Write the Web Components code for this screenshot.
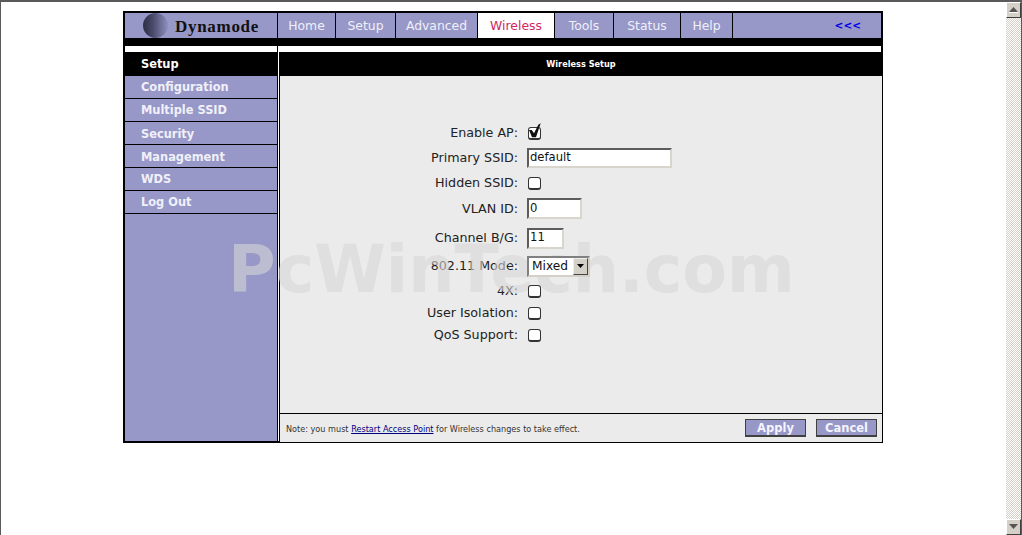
<!DOCTYPE html>
<html><head><meta charset="utf-8"><style>
html,body{margin:0;padding:0;height:100%;overflow:hidden;background:#fff}
body{font-family:"DejaVu Sans",sans-serif}
</style></head><body>
<dm-window>
  <dm-frame>
    <dm-tab slot="tabs" w="57">Home</dm-tab>
    <dm-tab slot="tabs" w="59">Setup</dm-tab>
    <dm-tab slot="tabs" w="81">Advanced</dm-tab>
    <dm-tab slot="tabs" w="76" active>Wireless</dm-tab>
    <dm-tab slot="tabs" w="58">Tools</dm-tab>
    <dm-tab slot="tabs" w="66">Status</dm-tab>
    <dm-tab slot="tabs" w="51">Help</dm-tab>
    <dm-side slot="side" active>Setup</dm-side>
    <dm-side slot="side">Configuration</dm-side>
    <dm-side slot="side">Multiple SSID</dm-side>
    <dm-side slot="side" style="line-height:25px">Security</dm-side>
    <dm-side slot="side" style="line-height:25px">Management</dm-side>
    <dm-side slot="side">WDS</dm-side>
    <dm-side slot="side">Log Out</dm-side>
    <dm-row h="25" label="Enable AP:"><dm-check checked></dm-check></dm-row>
    <dm-row h="25" label="Primary SSID:"><dm-text w="145" h="20">default</dm-text></dm-row>
    <dm-row h="26" label="Hidden SSID:"><dm-check></dm-check></dm-row>
    <dm-row h="25" label="VLAN ID:"><dm-text w="55" h="21">0</dm-text></dm-row>
    <dm-row h="34" label="Channel B/G:"><dm-text w="37" h="21">11</dm-text></dm-row>
    <dm-row h="22" label="802.11 Mode:"><dm-select>Mixed</dm-select></dm-row>
    <dm-row h="28" label="4X:"><dm-check></dm-check></dm-row>
    <dm-row h="16" label="User Isolation:"><dm-check></dm-check></dm-row>
    <dm-row h="28" label="QoS Support:"><dm-check></dm-check></dm-row>
    <dm-btn slot="actions">Apply</dm-btn>
    <dm-btn slot="actions">Cancel</dm-btn>
  </dm-frame>
</dm-window>
<script>
function def(name, css, html, init){
  customElements.define(name, class extends HTMLElement{
    connectedCallback(){
      if(this.shadowRoot) return;
      const r=this.attachShadow({mode:'open'});
      r.innerHTML='<style>'+css+'</style>'+html;
      if(init) init(this,r);
    }
  });
}
const PURPLE='#9797c8';
def('dm-window',`
:host{display:flex;width:1022px;height:535px;box-sizing:border-box;border-top:2px solid #5a5a5a;position:relative}
.page{flex:1;border-left:1px solid #5a5a5a;padding:9px 0 0 122px;min-width:0;position:relative}
.mark{position:absolute;left:227px;top:235px;font:bold 65px/1 "DejaVu Sans",sans-serif;color:rgba(215,215,215,.6);white-space:nowrap;pointer-events:none;z-index:5}
`,`<div class="page"><slot></slot><div class="mark">PcWinTech.com</div></div><dm-scroll></dm-scroll>`);
def('dm-scroll',`
:host{display:flex;flex-direction:column;width:16px;box-sizing:border-box;margin-top:0;border-right:1px solid #5a5a5a}
.b{height:16px;flex:none;box-sizing:border-box;background:#d4d0c8;border:1px solid;border-color:#fff #404040 #404040 #fff;display:flex;align-items:center;justify-content:center}
.t{flex:1;background-color:#fff;background-image:conic-gradient(#d4d0c8 25%,#fff 0 50%,#d4d0c8 0 75%,#fff 0);background-size:2px 2px}
`,`<div class="b"><svg width="9" height="6"><path d="M4.5 0L9 5H0z" fill="#555"/><path d="M0 5h9v1H0z" fill="#fff"/></svg></div><div class="t"></div><div class="b"><svg width="9" height="6"><path d="M0 0h9L4.5 5z" fill="#555"/></svg></div>`);
def('dm-frame',`
:host{display:flex;flex-direction:column;width:760px;height:432px;box-sizing:border-box;border:2px solid #000;background:#000}
header{display:flex;gap:1px;height:25px;flex:none}
.logo{width:152px;background:${PURPLE};display:flex;align-items:center;box-sizing:border-box;padding-left:18px;gap:7px}
.ball{width:25px;height:25px;border-radius:50%;background:linear-gradient(90deg,#2e2e44 0,#4a4a6c 40%,#9090c0 100%);flex:none}
.brand{font:bold 17px/1 "Liberation Serif",serif;color:#111;letter-spacing:.7px;position:relative;top:1px}
.rest{flex:1;background:${PURPLE};display:flex;align-items:center;justify-content:flex-end;padding-right:20px;font:bold 10.5px/1 "DejaVu Sans",sans-serif;color:#0000e6}
.body{display:flex;flex:1;margin-top:8px;min-height:0;gap:1px}
.left{width:152px;flex:none;display:flex;flex-direction:column;background:${PURPLE}}
.bar{height:6px;background:#fff;flex:none}
.right{flex:1;display:flex;flex-direction:column;background:#fff;min-width:0}
main{flex:1;margin:0 -1px -1px 1px;border-left:1px solid #000;display:flex;flex-direction:column;background:#ebebeb;min-height:0}
.title{height:24px;flex:none;background:#000;color:#fff;font:bold 8.2px/24px "DejaVu Sans",sans-serif;text-align:center}
.form{flex:1;padding-top:44px;box-sizing:border-box}
footer{height:28px;flex:none;border-top:1px solid #000;display:flex;align-items:center;justify-content:space-between;padding:0 5px 0 6px;font:8.15px/1 "DejaVu Sans",sans-serif;color:#333}
footer span.n{position:relative;top:1px}
footer a{color:#000080;text-decoration:underline}
.acts{display:flex;gap:10px}
`,`<header><div class="logo"><div class="ball"></div><div class="brand">Dynamode</div></div><slot name="tabs"></slot><div class="rest"><span>&lt;&lt;&lt;</span></div></header>
<div class="body"><div class="left"><div class="bar"></div><slot name="side"></slot></div>
<div class="right"><div class="bar"></div><main><div class="title">Wireless Setup</div><div class="form"><slot></slot></div>
<footer><span class="n">Note: you must <a href="#">Restart Access Point</a> for Wireless changes to take effect.</span><div class="acts"><slot name="actions"></slot></div></footer></main></div></div>`);
def('dm-tab',`
:host{display:flex;align-items:center;justify-content:center;background:${PURPLE};color:#f0f0f8;font:12.4px/1 "DejaVu Sans",sans-serif;flex:none;padding-top:1px;box-sizing:border-box}
:host([active]){background:#fff;color:#d0285f}
`,`<slot></slot>`,(e)=>{e.style.width=e.getAttribute('w')+'px'});
def('dm-side',`
:host{display:block;height:22px;background:${PURPLE};border-bottom:1px solid #000;padding-left:16px;color:#f0f0f8;font:bold 11.4px/23px "DejaVu Sans",sans-serif}
:host([active]){background:#000;color:#fff;height:24px;border-bottom:0;line-height:24px}
`,`<slot></slot>`);
def('dm-row',`
:host{display:grid;grid-template-columns:238px 1fr;column-gap:9px;align-items:center;font:12.7px/1 "DejaVu Sans",sans-serif;color:#222}
.l{text-align:right;white-space:nowrap;padding-top:1px}
.c{display:flex;align-items:center;min-width:0}
`,`<div class="l"></div><div class="c"><slot></slot></div>`,(e,r)=>{r.querySelector('.l').textContent=e.getAttribute('label');e.style.height=e.getAttribute('h')+'px'});
def('dm-check',`
:host{display:block;width:13px;height:13px;margin-left:1px;box-sizing:border-box;position:relative;z-index:6;background:#fff;border:1px solid #333;border-radius:3px;border-bottom-width:2px}
:host([checked]){margin-top:2px}
svg{position:absolute;left:-1px;top:-5px}
`,``,(e,r)=>{if(e.hasAttribute('checked')){r.innerHTML+='<svg width="14" height="15" viewBox="0 0 14 15"><path d="M1 7H3.700L6 10.300 10.300 1.700 12.700 .3 8 14.300H4z" fill="#111"/></svg>'}});
def('dm-text',`
:host{display:flex;box-sizing:border-box;position:relative;z-index:6;background:#fff;border:2px solid;border-color:#5c5c5c #d8d5cd #d8d5cd #5c5c5c;font:11.6px/1 "DejaVu Sans",sans-serif;color:#111;padding-left:1px;align-items:center}
`,`<slot></slot>`,(e)=>{e.style.width=e.getAttribute('w')+'px';e.style.height=e.getAttribute('h')+'px'});
def('dm-select',`
:host{display:flex;width:63px;height:21px;box-sizing:border-box;position:relative;z-index:6;border:2px solid;border-color:#808080 #d4d0c8 #d4d0c8 #808080;background:#fff;font:12.2px/1 "DejaVu Sans",sans-serif;color:#111;align-items:center}
.t{flex:1;padding-left:3px}
.a{width:15px;height:17px;box-sizing:border-box;background:#d4d0c8;border:1px solid;border-color:#eee #444 #444 #eee;display:flex;align-items:center;justify-content:center}
`,`<span class="t"><slot></slot></span><span class="a"><svg width="7" height="4"><path d="M0 0h7L3.500 4z" fill="#000"/></svg></span>`);
def('dm-btn',`
:host{display:flex;align-items:center;justify-content:center;width:61px;height:18px;box-sizing:border-box;border:1px solid #404040;border-width:1px 1px 2px 1px;background:${PURPLE};color:#f4f4fc;font:bold 11.5px/1 "DejaVu Sans",sans-serif;padding-top:2px}
`,`<slot></slot>`);
</script>
</body></html>
